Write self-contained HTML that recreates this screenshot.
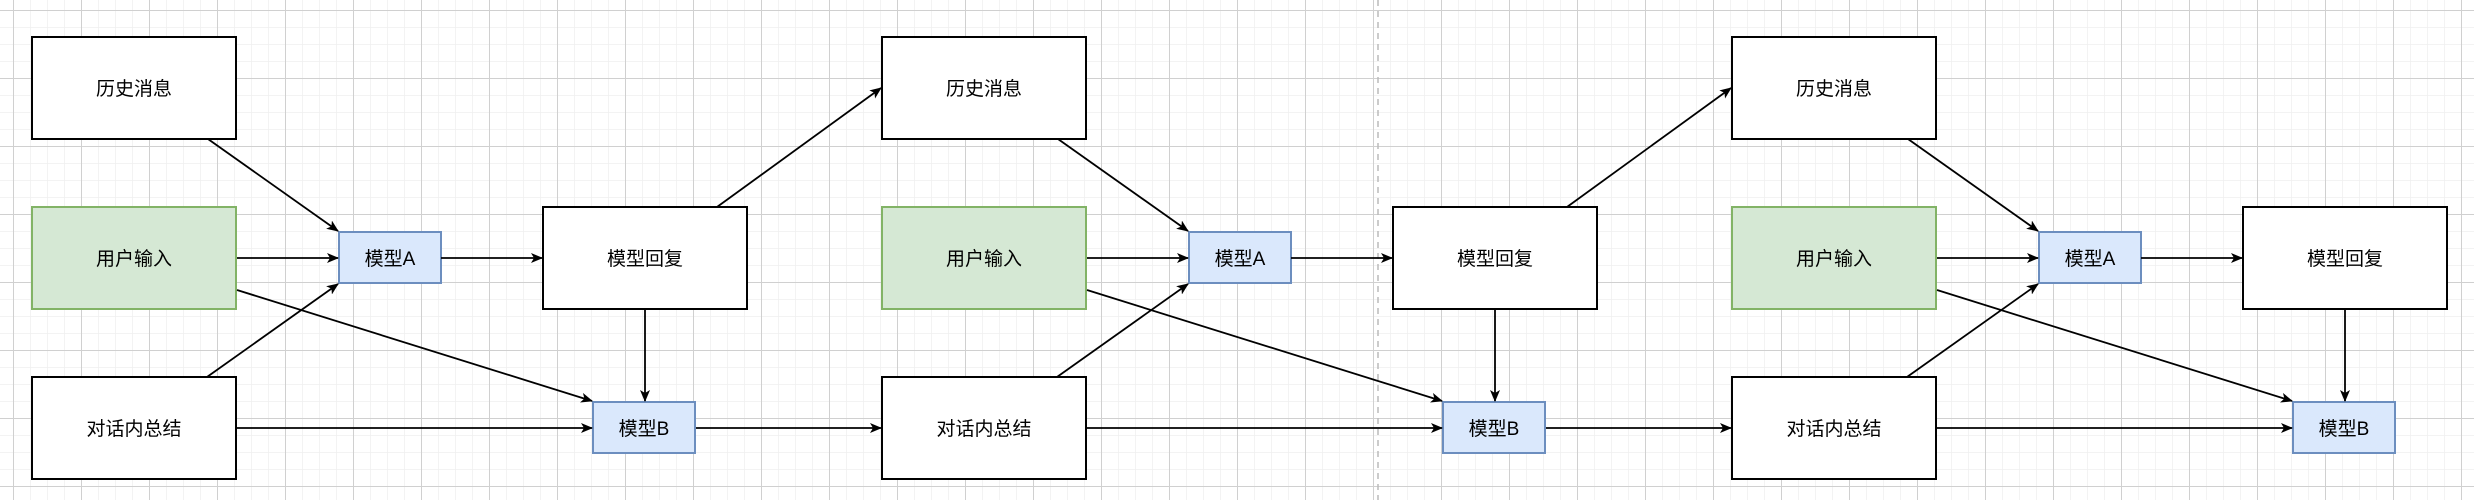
<!DOCTYPE html>
<html><head><meta charset="utf-8"><style>
html,body{margin:0;padding:0;background:#fff}
svg{display:block}
text{font-family:"Liberation Sans","Noto Sans CJK SC",sans-serif;font-size:19px;fill:#000}
</style></head><body>
<svg width="2474" height="500" xmlns="http://www.w3.org/2000/svg">
<defs>
<pattern id="minor" x="13" y="10" width="17" height="17" patternUnits="userSpaceOnUse">
<path d="M0 0H17M0 0V17" stroke="#efefef" stroke-width="1.5" fill="none"/>
</pattern>
<pattern id="major" x="13" y="10" width="68" height="68" patternUnits="userSpaceOnUse">
<path d="M0 0.5H68M0.5 0V68" stroke="#d0d0d0" stroke-width="1" fill="none"/>
</pattern>
<marker id="ar" viewBox="0 0 12 10" refX="11" refY="5" markerWidth="12" markerHeight="10" markerUnits="userSpaceOnUse" orient="auto">
<path d="M0 0L12 5L0 10L3 5Z" fill="#000"/>
</marker>
<g id="base" stroke-width="2">
<rect x="32" y="37" width="204" height="102" fill="#fff" stroke="#000"/>
<rect x="32" y="207" width="204" height="102" fill="#d5e8d4" stroke="#82b366"/>
<rect x="32" y="377" width="204" height="102" fill="#fff" stroke="#000"/>
<rect x="339" y="232" width="102" height="51" fill="#dae8fc" stroke="#6c8ebf"/>
<rect x="543" y="207" width="204" height="102" fill="#fff" stroke="#000"/>
<rect x="593" y="402" width="102" height="51" fill="#dae8fc" stroke="#6c8ebf"/>
<g stroke="#000" stroke-width="1.8" fill="none" marker-end="url(#ar)">
<path d="M208 139L338 231"/>
<path d="M237 258L338 258"/>
<path d="M237 290L592 401"/>
<path d="M207 377L338 284"/>
<path d="M237 428L592 428"/>
<path d="M441 258L542 258"/>
<path d="M645 309L645 401"/>
</g>
<text x="134" y="95" text-anchor="middle" stroke="none">历史消息</text>
<text x="134" y="265" text-anchor="middle" stroke="none">用户输入</text>
<text x="134" y="435" text-anchor="middle" stroke="none">对话内总结</text>
<text x="390" y="265" text-anchor="middle" stroke="none">模型A</text>
<text x="645" y="265" text-anchor="middle" stroke="none">模型回复</text>
<text x="644" y="435" text-anchor="middle" stroke="none">模型B</text>
</g>
<g id="link" stroke="#000" stroke-width="1.8" fill="none" marker-end="url(#ar)">
<path d="M717 207L881 88"/>
<path d="M696 428L881 428"/>
</g>
</defs>
<rect width="2474" height="500" fill="url(#minor)"/>
<rect width="2474" height="500" fill="url(#major)"/>
<line x1="1378" y1="0" x2="1378" y2="500" stroke="#bbb" stroke-width="1.5" stroke-dasharray="6 5"/>
<use href="#link"/>
<use href="#link" x="850"/>
<use href="#base"/>
<use href="#base" x="850"/>
<use href="#base" x="1700"/>
</svg>
</body></html>
